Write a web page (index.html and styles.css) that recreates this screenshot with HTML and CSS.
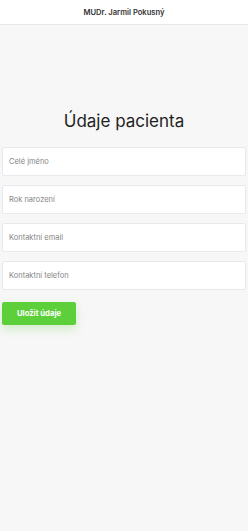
FILE: index.html
```html
<!DOCTYPE html>
<html lang="cs">
<head>
<meta charset="utf-8">
<link rel="stylesheet" href="styles.css">
</head>
<body>
<header class="topbar">MUDr. Jarmil Pokusný</header>
<main class="content">
  <h1 class="title">Údaje pacienta</h1>
  <form class="form">
    <input class="field" type="text" placeholder="Celé jméno">
    <input class="field" type="text" placeholder="Rok narození">
    <input class="field" type="text" placeholder="Kontaktní email">
    <input class="field" type="text" placeholder="Kontaktní telefon">
    <button class="save" type="button">Uložit údaje</button>
  </form>
</main>
</body>
</html>
```
FILE: styles.css
```css
html, body {
  margin: 0;
  padding: 0;
  background: #f7f7f7;
  font-family: Inter, "Noto Sans", sans-serif;
  height: 100%;
}
.topbar {
  height: 24px;
  background: #fff;
  border-bottom: 1px solid #e8e8e8;
  display: flex;
  align-items: center;
  justify-content: center;
  font-size: 7.6px;
  font-weight: 600;
  color: #333;
}
.content {
  padding: 0 2px;
}
.title {
  margin: 84px 0 0;
  text-align: center;
  font-size: 17px;
  font-weight: 400;
  color: #222;
  line-height: 24px;
}
.form {
  margin-top: 14px;
  display: flex;
  flex-direction: column;
  gap: 8px;
}
.field {
  box-sizing: border-box;
  height: 29px;
  width: 100%;
  margin: 0;
  border: 1px solid #e6e9ee;
  border-radius: 2px;
  background: #fff;
  padding: 0 6px;
  font-family: inherit;
  font-size: 7.5px;
  color: #333;
  outline: none;
}
.field + .field {
  margin-top: 1px;
}
.field::placeholder {
  color: #858585;
}
.save {
  align-self: flex-start;
  margin-top: 4px;
  width: 74px;
  height: 23px;
  border: none;
  border-radius: 2px;
  background: #5dcf3b;
  color: #fff;
  font-family: inherit;
  font-size: 7.7px;
  font-weight: 700;
  box-shadow: 0 4px 10px rgba(93, 207, 59, 0.25);
}
```
